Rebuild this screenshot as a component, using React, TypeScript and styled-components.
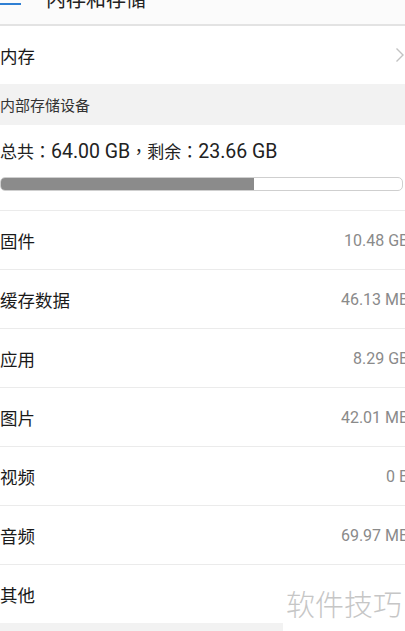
import styled, { createGlobalStyle } from 'styled-components';

const GlobalStyle = createGlobalStyle`
    html, body {
        margin: 0;
        padding: 0;
        background-color: #f2f2f2;
        overflow: hidden;
    }
    body {
        font-family: Roboto, "Noto Sans CJK SC", sans-serif;
        color: #1a1a1a;
    }
`;

const Page = styled.div`
    position: relative;
    width: 405px;
    height: 631px;
    overflow: hidden;
`;

const Header = styled.div`
    display: flex;
    align-items: flex-start;
    height: 24px;
    overflow: hidden;
    background-color: #fbfbfb;
    border-bottom: 2px solid #e3e3e3;
`;

const BackLine = styled.div`
    width: 21px;
    height: 2px;
    margin-top: 3px;
    background-color: #2f7fd3;
`;

const Title = styled.span`
    margin-left: 25px;
    margin-top: -10px;
    font-size: 20px;
    line-height: 20px;
    color: #222;
`;

const LinkRow = styled.div`
    display: flex;
    justify-content: space-between;
    align-items: center;
    height: 58px;
    background-color: #fff;
    font-size: 17.5px;
`;

const Chevron = styled.svg`
    width: 10px;
    height: 16px;
`;

const SectionTitle = styled.div`
    display: flex;
    align-items: center;
    height: 41px;
    background-color: #f2f2f2;
    font-size: 15px;
    color: #333;
`;

const Summary = styled.div`
    display: flex;
    flex-direction: column;
    padding: 15px 2px 19px 0;
    background-color: #fff;
`;

const SummaryText = styled.div`
    font-family: Roboto, "Noto Sans CJK TC", sans-serif;
    font-size: 17px;
    line-height: 24px;
    color: #222;
`;

const Num = styled.span`
    font-size: 19.5px;
`;

const Bar = styled.div`
    margin-top: 13px;
    height: 14px;
    box-sizing: border-box;
    border: 1px solid #cfcfcf;
    border-radius: 5px;
    overflow: hidden;
    background-color: #fff;
`;

const BarFill = styled.div`
    height: 100%;
    background-color: #8b8b8b;
`;

const List = styled.div`
    display: flex;
    flex-direction: column;
    background-color: #fff;
`;

const Row = styled.div`
    display: flex;
    justify-content: space-between;
    align-items: center;
    height: 58px;
    border-top: 1px solid #ebebeb;
`;

const Label = styled.span`
    font-size: 17.5px;
    color: #1a1a1a;
`;

const Value = styled.span`
    font-size: 16px;
    color: #8a8a8a;
    margin-right: -4px;
`;

const Watermark = styled.div`
    position: absolute;
    right: 0;
    top: 574px;
    width: 122px;
    height: 57px;
    display: flex;
    align-items: center;
    justify-content: center;
    background-color: #fff;
    font-family: "Noto Sans CJK SC", sans-serif;
    font-size: 29px;
    font-weight: 300;
    color: #c6c6c6;
`;

const items = [
    { label: '固件', value: '10.48 GB' },
    { label: '缓存数据', value: '46.13 MB' },
    { label: '应用', value: '8.29 GB' },
    { label: '图片', value: '42.01 MB' },
    { label: '视频', value: '0 B' },
    { label: '音频', value: '69.97 MB' },
    { label: '其他', value: '' },
];

const total = 64.0;
const free = 23.66;

const App = () => {
    const used = ((total - free) / total) * 100;

    return (
        <>
            <GlobalStyle />
            <Page>
                <Header>
                    <BackLine />
                    <Title>内存和存储</Title>
                </Header>
                <LinkRow>
                    <span>内存</span>
                    <Chevron viewBox="0 0 10 16">
                        <path d="M1.5 1.5 L8 8 L1.5 14.5" fill="none" stroke="#c2c2c2" strokeWidth="1.4" />
                    </Chevron>
                </LinkRow>
                <SectionTitle>内部存储设备</SectionTitle>
                <Summary>
                    <SummaryText>
                        总共：<Num>{total.toFixed(2)} GB</Num>，剩余：<Num>{free.toFixed(2)} GB</Num>
                    </SummaryText>
                    <Bar>
                        <BarFill style={{ width: `${used}%` }} />
                    </Bar>
                </Summary>
                <List>
                    {items.map((item) => (
                        <Row key={item.label}>
                            <Label>{item.label}</Label>
                            <Value>{item.value}</Value>
                        </Row>
                    ))}
                </List>
                <Watermark>软件技巧</Watermark>
            </Page>
        </>
    );
};

export default App;
